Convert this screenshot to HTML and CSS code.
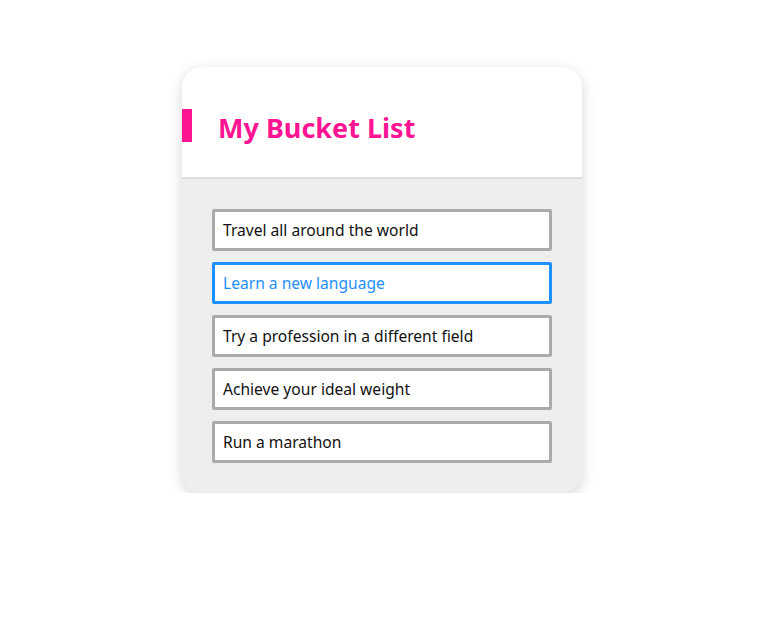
FILE: index.html
```html
<!DOCTYPE html>
<html>
<head>
<meta charset="utf-8">
<link rel="stylesheet" href="styles.css">
</head>
<body>
<div class="card">
  <div class="card-header">
    <h1 class="title">My Bucket List</h1>
  </div>
  <ul class="list">
    <li class="item">Travel all around the world</li>
    <li class="item active">Learn a new language</li>
    <li class="item">Try a profession in a different field</li>
    <li class="item">Achieve your ideal weight</li>
    <li class="item">Run a marathon</li>
  </ul>
</div>
</body>
</html>
```
FILE: styles.css
```css
html, body {
  margin: 0;
  padding: 0;
  background: #fff;
}
body {
  font-family: "Noto Sans", "Noto Sans CJK KR", sans-serif;
  padding: 67px 0 0 182px;
}
.card {
  width: 400px;
  border-radius: 20px;
  overflow: hidden;
  background: #eee;
  box-shadow: 0 4px 14px rgba(0, 0, 0, 0.16);
}
.card-header {
  box-sizing: border-box;
  background: #fff;
  height: 112px;
  border-bottom: 2px solid #ddd;
  display: flex;
  align-items: center;
  position: relative;
  padding-top: 10px;
}
.card-header::before {
  content: "";
  position: absolute;
  left: 0;
  top: 42px;
  width: 10px;
  height: 33px;
  background: #ff1493;
}
.title {
  margin: 0 0 0 36px;
  font-size: 27px;
  font-weight: 700;
  color: #ff1493;
  line-height: 1;
}
.list {
  list-style: none;
  margin: 0;
  padding: 30px;
  display: flex;
  flex-direction: column;
  gap: 11px;
}
.item {
  box-sizing: border-box;
  height: 42px;
  width: 340px;
  border: 3px solid #aaa;
  border-radius: 2px;
  background: #fff;
  padding: 0 8px;
  display: flex;
  align-items: center;
  font-size: 15.6px;
  color: #111;
}
.item.active {
  border-color: #1e90ff;
  color: #1e90ff;
}
```
